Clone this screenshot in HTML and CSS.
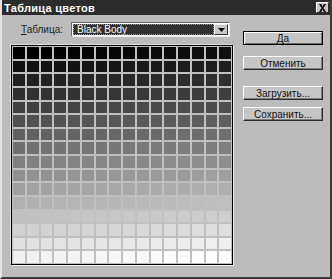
FILE: index.html
```html
<!DOCTYPE html>
<html lang="ru">
<head>
    <meta charset="UTF-8">
    <meta name="viewport" content="width=device-width, initial-scale=1.0">
    <title>Таблица цветов</title>
    <link rel="stylesheet" href="styles.css">
</head>
<body>
    <div class="window">
        <div class="titlebar">
            <span class="title">Таблица цветов</span>
            <span class="close">
                <svg width="9" height="8" viewBox="0 0 9 8">
                    <path d="M1 0h2l1.5 2.5L6 0h2L5.5 4 8 8H6L4.5 5.5 3 8H1l2.5-4z" fill="#000"/>
                </svg>
            </span>
        </div>
        <div class="content">
            <div class="main">
                <div class="picker">
                    <span class="picker-label"><u>Т</u>аблица:</span>
                    <div class="combo">
                        <span class="combo-value">Black Body</span>
                        <span class="combo-arrow">
                            <svg width="7" height="4" viewBox="0 0 7 4"><path d="M0 0h7L3.5 4z" fill="#000"/></svg>
                        </span>
                    </div>
                </div>
                <div class="swatches" id="swatches"></div>
            </div>
            <div class="buttons">
                <button class="btn btn-default">Да</button>
                <button class="btn">Отменить</button>
                <button class="btn btn-load">Загрузить...</button>
                <button class="btn btn-save">Сохранить...</button>
            </div>
        </div>
    </div>

    <script>
        // 16 x 16 grey table, black to white
        const swatches = document.getElementById("swatches");
        for (let i = 0; i < 256; i++) {
            const cell = document.createElement("div");
            cell.className = "swatch";
            cell.style.backgroundColor = `rgb(${i}, ${i}, ${i})`;
            swatches.appendChild(cell);
        }
    </script>
</body>
</html>
```

FILE: styles.css
```css
body {
    margin: 0;
    background-color: #bcbcbc;
    font-family: "Liberation Sans", Arial, sans-serif;
    font-size: 10px;
    color: #000;
}
.window {
    width: 332px;
    height: 279px;
    box-sizing: border-box;
    background-color: #bcbcbc;
    border-left: 2px solid #e4e4e4;
    border-right: 2px solid #3c3c3c;
    border-bottom: 2px solid #3c3c3c;
    display: flex;
    flex-direction: column;
}
.titlebar {
    height: 15px;
    background-color: #2c2c2c;
    display: flex;
    align-items: center;
    justify-content: space-between;
    padding: 0 1px 0 2px;
}
.title {
    color: #fff;
    font-size: 11px;
    font-weight: bold;
    letter-spacing: 0.3px;
}
.close {
    width: 13px;
    height: 11px;
    box-sizing: border-box;
    background-color: #c8c8c8;
    border: 1px solid;
    border-color: #fff #303030 #303030 #fff;
    display: flex;
    align-items: center;
    justify-content: center;
}
.content {
    display: flex;
    padding-left: 9px;
}
.main {
    width: 222px;
    padding-top: 7px;
}
.picker {
    display: flex;
    align-items: center;
    margin-bottom: 8px;
}
.picker-label {
    width: 50px;
    margin-left: 10px;
    color: #222;
}
.combo {
    width: 159px;
    height: 15px;
    box-sizing: border-box;
    border: 1px solid;
    border-color: #6a6a6a #f0f0f0 #f0f0f0 #6a6a6a;
    background-color: #fff;
    display: flex;
    padding: 1px;
}
.combo-value {
    flex: 1;
    background-color: #303030;
    color: #fff;
    padding-left: 4px;
    line-height: 11px;
    outline: 1px dotted #9a9a9a;
    outline-offset: -1px;
}
.combo-arrow {
    width: 14px;
    box-sizing: border-box;
    background-color: #c8c8c8;
    border: 1px solid;
    border-color: #f4f4f4 #333 #333 #f4f4f4;
    display: flex;
    align-items: center;
    justify-content: center;
}
.swatches {
    width: 222px;
    height: 220px;
    box-sizing: border-box;
    border: 1px solid #000;
    box-shadow: 1px 1px 0 #f0f0f0, -1px -1px 0 #dcdcdc;
    background-color: #c0c0c0;
    padding: 1px;
    display: grid;
    grid-template-columns: repeat(16, 1fr);
    grid-template-rows: repeat(16, 1fr);
    gap: 2px;
}
.buttons {
    display: flex;
    flex-direction: column;
    margin-left: 10px;
    padding-top: 16px;
}
.btn {
    width: 80px;
    height: 14px;
    padding: 0;
    box-sizing: border-box;
    background-color: #c6c6c6;
    border: 1px solid;
    border-color: #fff #2c2c2c #2c2c2c #fff;
    box-shadow: inset -1px -1px 0 #7c7c7c;
    font-family: "Liberation Sans", Arial, sans-serif;
    font-size: 10px;
    line-height: 11px;
    color: #111;
    margin-bottom: 11px;
}
.btn-default {
    border-color: #000;
    box-shadow: inset 1px 1px 0 #fff, inset -1px -1px 0 #6c6c6c;
}
.btn-load {
    margin-top: 5px;
    margin-bottom: 7px;
}
```
